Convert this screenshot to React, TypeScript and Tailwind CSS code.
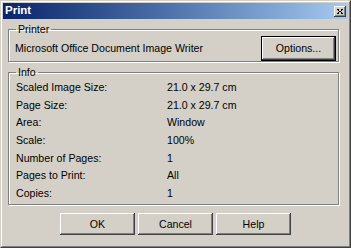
import type { ReactNode } from 'react'

const info: [string, string][] = [
  ['Scaled Image Size:', '21.0 x 29.7 cm'],
  ['Page Size:', '21.0 x 29.7 cm'],
  ['Area:', 'Window'],
  ['Scale:', '100%'],
  ['Number of Pages:', '1'],
  ['Pages to Print:', 'All'],
  ['Copies:', '1'],
]

const raised =
  'shadow-[inset_-1px_-1px_#404040,inset_1px_1px_#ffffff,inset_-2px_-2px_#808080,inset_2px_2px_#d4d0c8]'

function GroupBox({ label, className, children }: { label: string; className?: string; children: ReactNode }) {
  return (
    <fieldset
      className={`ml-[5px] w-[331px] border border-[#808080] shadow-[inset_1px_1px_0_#ffffff,1px_1px_0_#ffffff] ${className ?? ''}`}
    >
      <legend className="ml-[7px] px-[2px] leading-[13px]">{label}</legend>
      {children}
    </fieldset>
  )
}

function Button({ children }: { children: ReactNode }) {
  return (
    <button className={`flex h-[22px] w-[75px] items-center justify-center bg-[#d4d0c8] pt-px ${raised}`}>
      {children}
    </button>
  )
}

export default function App() {
  return (
    <div
      className="h-[248px] w-[351px] border border-t-[#d4d0c8] border-l-[#d4d0c8] border-r-[#404040] border-b-[#404040] bg-[#d4d0c8] text-[10.6px] text-black"
      style={{ fontFamily: '"Liberation Sans", Arial, sans-serif' }}
    >
      <div className="flex h-full flex-col border border-t-white border-l-white border-r-[#808080] border-b-[#808080] p-px">
        {/* Title bar */}
        <div className="flex h-[16px] items-center justify-between bg-gradient-to-r from-[#0a246a] to-[#a6caf0] pl-[2px] pr-[2px]">
          <span className="text-[11.5px] font-bold leading-none text-white">Print</span>
          <button className={`flex h-[11px] w-[12px] items-center justify-center bg-[#d4d0c8] ${raised}`}>
            <svg width="6" height="5" viewBox="0 0 6 5" shapeRendering="crispEdges">
              <path d="M0 0h2v1h-2zM4 0h2v1h-2zM1 1h1v1h-1zM4 1h1v1h-1zM2 2h2v1h-2zM1 3h1v1h-1zM4 3h1v1h-1zM0 4h2v1h-2zM4 4h2v1h-2z" fill="#000" />
            </svg>
          </button>
        </div>

        {/* Printer */}
        <GroupBox label="Printer" className="mt-[4px] h-[39px]">
          <div className="flex items-center justify-between pl-[6px] pr-[2px]">
            <span className="mt-[1px]">Microsoft Office Document Image Writer</span>
            <button className="h-[25px] w-[75px] border border-black bg-[#d4d0c8] shadow-[inset_-1px_-1px_#404040,inset_1px_1px_#ffffff,inset_-2px_-2px_#808080]">
              Options...
            </button>
          </div>
        </GroupBox>

        {/* Info */}
        <GroupBox label="Info" className="mt-[4px] h-[139px]">
          <div className="grid grid-cols-[151px_1fr] pl-[7px]">
            {info.map(([k, v]) => (
              <div key={k} className="col-span-2 grid h-[17.67px] grid-cols-subgrid items-center">
                <span>{k}</span>
                <span>{v}</span>
              </div>
            ))}
          </div>
        </GroupBox>

        {/* Actions */}
        <div className="mt-[8px] flex justify-center gap-[3px]">
          <Button>OK</Button>
          <Button>Cancel</Button>
          <Button>Help</Button>
        </div>
      </div>
    </div>
  )
}
